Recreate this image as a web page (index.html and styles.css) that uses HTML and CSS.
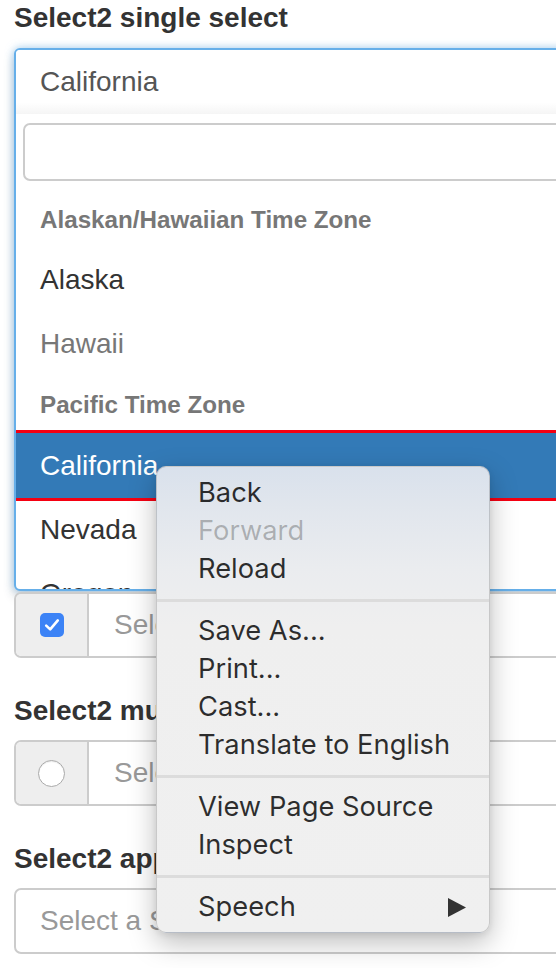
FILE: index.html
```html
<!DOCTYPE html>
<html>
<head>
<meta charset="utf-8">
<title>Select2</title>
<link rel="stylesheet" href="styles.css">
</head>
<body>
<div class="page">
  <label class="field-label first">Select2 single select</label>
  <div class="s2 s2-open">
    <div class="s2-selection">California</div>
    <div class="s2-search"><div class="s2-search-input"></div></div>
    <ul class="s2-results">
      <li class="s2-group">
        <strong class="s2-group-label">Alaskan/Hawaiian Time Zone</strong>
        <ul class="s2-sub">
          <li class="s2-option">Alaska</li>
          <li class="s2-option is-disabled">Hawaii</li>
        </ul>
      </li>
      <li class="s2-group">
        <strong class="s2-group-label">Pacific Time Zone</strong>
        <ul class="s2-sub">
          <li class="s2-option is-highlighted">California</li>
          <li class="s2-option">Nevada</li>
          <li class="s2-option">Oregon</li>
          <li class="s2-option">Washington</li>
        </ul>
      </li>
    </ul>
  </div>

  <div class="input-group after-dropdown">
    <span class="addon">
      <svg class="checkbox" width="24" height="24" viewBox="0 0 24 24"><rect x="0" y="0" width="24" height="24" rx="5" fill="#3c83f6"/><path d="M6.2 12.6 L10.2 16.4 L17.8 7.4" fill="none" stroke="#fff" stroke-width="2.6" stroke-linecap="round" stroke-linejoin="round"/></svg>
    </span>
    <div class="ig-input">Select a State</div>
  </div>

  <label class="field-label">Select2 multi-value select</label>
  <div class="input-group">
    <span class="addon"><span class="radio"></span></span>
    <div class="ig-input">Select a State</div>
  </div>

  <label class="field-label">Select2 append-to-body</label>
  <div class="select-box">Select a State</div>
</div>

<div class="context-menu">
  <div class="cm-item">Back</div>
  <div class="cm-item is-disabled">Forward</div>
  <div class="cm-item">Reload</div>
  <div class="cm-sep"></div>
  <div class="cm-item">Save As...</div>
  <div class="cm-item">Print...</div>
  <div class="cm-item">Cast...</div>
  <div class="cm-item">Translate to English</div>
  <div class="cm-sep"></div>
  <div class="cm-item">View Page Source</div>
  <div class="cm-item">Inspect</div>
  <div class="cm-sep"></div>
  <div class="cm-item has-sub"><span>Speech</span><svg class="cm-arrow" width="18" height="19" viewBox="0 0 18 19"><polygon points="0,0 18,9.5 0,19" fill="#333"/></svg></div>
</div>
</body>
</html>
```

FILE: styles.css
```css
html, body {
  margin: 0;
  padding: 0;
  background: #fff;
  overflow: hidden;
}
body {
  width: 556px;
  height: 968px;
  position: relative;
  font-family: "Liberation Sans", Arial, Helvetica, sans-serif;
  color: #333;
}
.page {
  width: 640px;
  padding-left: 14px;
}
.field-label {
  display: block;
  font-weight: bold;
  font-size: 28px;
  line-height: 36px;
  margin: 35px 0 11px;
  color: #333;
}
.field-label.first {
  margin: 0 0 12px;
}

/* Select2 open dropdown */
.s2 {
  border: 2px solid #66afe9;
  border-radius: 6px;
  background: #fff;
  box-shadow: 0 0 8px rgba(102, 175, 233, 0.6), 0 6px 12px rgba(0, 0, 0, 0.175);
  overflow: hidden;
}
.s2-selection {
  height: 64px;
  display: flex;
  align-items: center;
  padding-left: 24px;
  font-size: 28px;
  color: #555;
  background: linear-gradient(#fff 82%, #f5f5f5);
}
.s2-search {
  padding: 9px 7px 10px 7px;
}
.s2-search-input {
  height: 58px;
  box-sizing: border-box;
  border: 2px solid #ccc;
  border-radius: 7px;
  background: #fff;
}
.s2-results {
  list-style: none;
  margin: 0;
  padding: 0;
  height: 398px;
  overflow: hidden;
}
.s2-sub {
  list-style: none;
  margin: 0;
  padding: 0;
}
.s2-group-label {
  display: flex;
  align-items: center;
  height: 57px;
  padding-left: 24px;
  font-size: 24.2px;
  font-weight: bold;
  color: #777;
}
.s2-option {
  display: flex;
  align-items: center;
  height: 64px;
  padding-left: 24px;
  font-size: 28px;
  color: #333;
}
.s2-option.is-disabled {
  color: #777;
}
.s2-option.is-highlighted {
  height: 65px;
  background: #337ab7;
  color: #fff;
  outline: 3px solid #f50012;
}

/* Input groups */
.input-group {
  display: flex;
  height: 66px;
  box-sizing: border-box;
  border: 2px solid #ccc;
  border-radius: 7px;
  overflow: hidden;
}
.input-group.after-dropdown {
  margin-top: 1px;
}
.addon {
  width: 73px;
  box-sizing: border-box;
  background: #eee;
  border-right: 2px solid #ccc;
  display: flex;
  align-items: center;
  justify-content: center;
}
.checkbox {
  display: block;
}
.radio {
  display: block;
  width: 27px;
  height: 27px;
  box-sizing: border-box;
  border-radius: 50%;
  background: #fff;
  border: 1px solid #a9a9a9;
  box-shadow: inset 0 1px 1px rgba(0, 0, 0, 0.08);
}
.ig-input {
  flex: 1;
  display: flex;
  align-items: center;
  padding-left: 25px;
  font-size: 28px;
  color: #999;
  background: #fff;
}
.select-box {
  height: 66px;
  box-sizing: border-box;
  border: 2px solid #ccc;
  border-radius: 7px;
  display: flex;
  align-items: center;
  padding-left: 24px;
  font-size: 28px;
  color: #999;
}

/* Context menu overlay */
.context-menu {
  position: absolute;
  left: 156px;
  top: 466px;
  width: 334px;
  height: 467px;
  box-sizing: border-box;
  padding: 7px 0 8px;
  border-radius: 10px;
  border: 1px solid rgba(0, 0, 0, 0.16);
  background: linear-gradient(#d9e1ec 0px, #e1e6ed 40px, #eaecef 100px, #efefef 160px, #f0f0f0 100%);
  box-shadow: 0 10px 28px rgba(0, 0, 0, 0.26), 0 2px 6px rgba(0, 0, 0, 0.08);
  font-family: Inter, "Noto Sans", sans-serif;
  font-size: 27.3px;
  color: rgba(0, 0, 0, 0.82);
}
.cm-item {
  height: 38px;
  line-height: 38px;
  padding-left: 41px;
  white-space: nowrap;
}
.cm-item.is-disabled {
  color: rgba(0, 0, 0, 0.26);
}
.cm-item.has-sub {
  display: flex;
  align-items: center;
  justify-content: space-between;
  padding-right: 23px;
}
.cm-arrow {
  display: block;
}
.cm-sep {
  height: 24px;
  display: flex;
  align-items: center;
}
.cm-sep::before {
  content: "";
  display: block;
  width: 100%;
  height: 3px;
  background: #dcdcdc;
}
```
